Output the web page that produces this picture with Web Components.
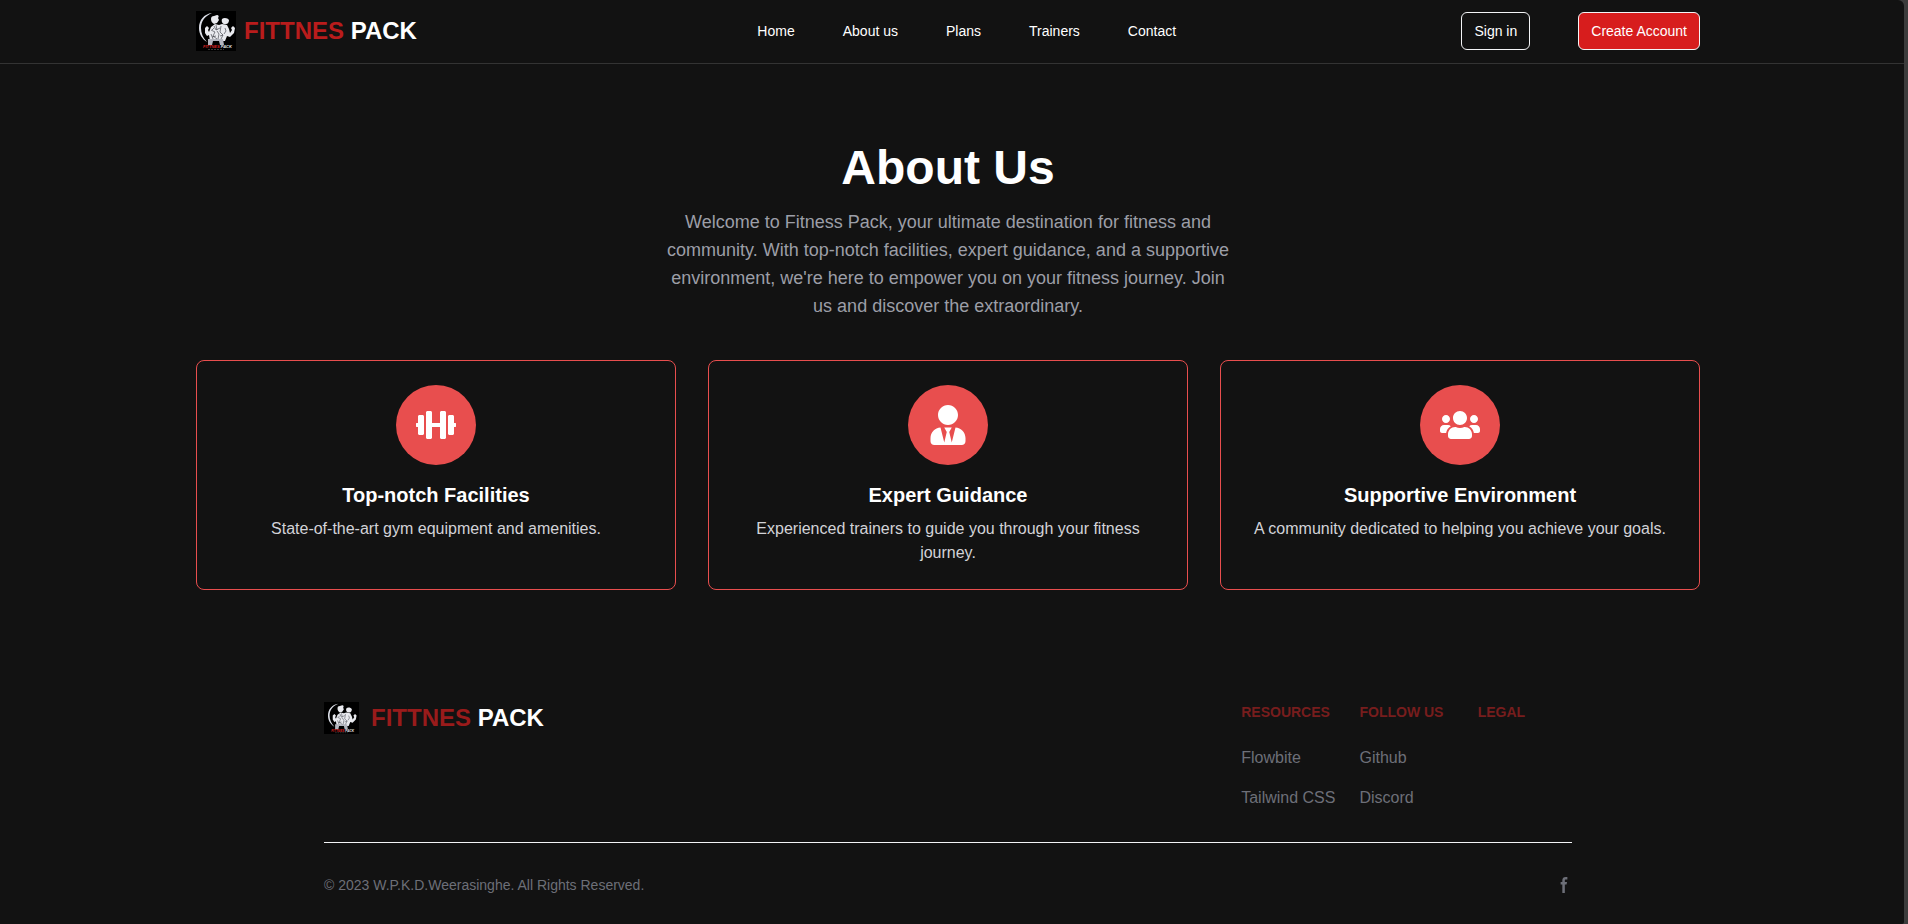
<!DOCTYPE html>
<html lang="en">
<head>
<meta charset="utf-8">
<meta name="viewport" content="width=device-width, initial-scale=1">
<title>Fittnes Pack - About us</title>
<style>
    *{box-sizing: border-box;}
    body{margin: 0;padding-right: 4px;background: #3c3c3c;font-family: Arial, "Liberation Sans", sans-serif;font-size: 16px;line-height: 24px;color: white;}
</style>
</head>
<body>
<fp-page>
    <fp-navbar slot="top">
        <a href="#home">Home</a>
        <a href="#about">About us</a>
        <a href="#plans">Plans</a>
        <a href="#trainers">Trainers</a>
        <a href="#contact">Contact</a>
    </fp-navbar>

    <fp-about>
        <span slot="title">About Us</span>
        <span slot="intro">Welcome to Fitness Pack, your ultimate destination for fitness and community. With top-notch facilities, expert guidance, and a supportive environment, we're here to empower you on your fitness journey. Join us and discover the extraordinary.</span>
        <fp-feature icon="dumbbell">
            <span slot="title">Top-notch Facilities</span>
            State-of-the-art gym equipment and amenities.
        </fp-feature>
        <fp-feature icon="trainer">
            <span slot="title">Expert Guidance</span>
            Experienced trainers to guide you through your fitness journey.
        </fp-feature>
        <fp-feature icon="users">
            <span slot="title">Supportive Environment</span>
            A community dedicated to helping you achieve your goals.
        </fp-feature>
    </fp-about>

    <fp-footer slot="bottom">
        <fp-links>
            <span slot="title">Resources</span>
            <a href="#flowbite">Flowbite</a>
            <a href="#tailwind">Tailwind CSS</a>
        </fp-links>
        <fp-links>
            <span slot="title">Follow us</span>
            <a href="#github">Github</a>
            <a href="#discord">Discord</a>
        </fp-links>
        <fp-links>
            <span slot="title">Legal</span>
        </fp-links>
        <span slot="copy">© 2023 W.P.K.D.Weerasinghe. All Rights Reserved.</span>
    </fp-footer>
</fp-page>

<script>
const ICONS = {
    dumbbell: {
        box: '0 0 640 512',
        d: 'M104 96H56c-13.3 0-24 10.7-24 24v104H8c-4.4 0-8 3.6-8 8v48c0 4.4 3.6 8 8 8h24v104c0 13.3 10.7 24 24 24h48c13.3 0 24-10.7 24-24V120c0-13.3-10.7-24-24-24zm528 128h-24V120c0-13.3-10.7-24-24-24h-48c-13.3 0-24 10.7-24 24v272c0 13.3 10.7 24 24 24h48c13.3 0 24-10.7 24-24V288h24c4.4 0 8-3.6 8-8v-48c0-4.4-3.6-8-8-8zM456 32h-48c-13.3 0-24 10.7-24 24v168H256V56c0-13.3-10.7-24-24-24h-48c-13.3 0-24 10.7-24 24v400c0 13.3 10.7 24 24 24h48c13.3 0 24-10.7 24-24V288h128v168c0 13.3 10.7 24 24 24h48c13.3 0 24-10.7 24-24V56c0-13.3-10.7-24-24-24z'
    },
    trainer: {
        box: '0 0 448 512',
        d: 'M224 256c70.7 0 128-57.3 128-128S294.7 0 224 0 96 57.3 96 128s57.3 128 128 128zm95.8 32.6L272 480l-32-136 32-56h-96l32 56-32 136-47.8-191.4C56.9 292 0 350.3 0 422.4V464c0 26.5 21.5 48 48 48h352c26.5 0 48-21.5 48-48v-41.6c0-72.1-56.9-130.4-128.2-133.8z'
    },
    users: {
        box: '0 0 640 512',
        d: 'M96 224c35.3 0 64-28.7 64-64s-28.7-64-64-64-64 28.7-64 64 28.7 64 64 64zm448 0c35.3 0 64-28.7 64-64s-28.7-64-64-64-64 28.7-64 64 28.7 64 64 64zm32 32h-64c-17.6 0-33.5 7.1-45.1 18.6 40.3 22.1 68.9 62 75.1 109.4h66c17.7 0 32-14.3 32-32v-32c0-35.3-28.7-64-64-64zm-256 0c61.9 0 112-50.1 112-112S381.9 32 320 32 208 82.1 208 144s50.1 112 112 112zm76.8 32h-8.3c-20.8 10-43.9 16-68.5 16s-47.6-6-68.5-16h-8.3C179.6 288 128 339.6 128 403.2V432c0 26.5 21.5 48 48 48h288c26.5 0 48-21.5 48-48v-28.8c0-63.6-51.6-115.2-115.2-115.2zm-223.7-13.4C161.5 263.1 145.6 256 128 256H64c-35.3 0-64 28.7-64 64v32c0 17.7 14.3 32 32 32h65.9c6.3-47.4 34.9-87.3 75.2-109.4z'
    }
};

// every element clones its own template into an open root
function define(name, html, setup) {
    const template = document.createElement('template');
    template.innerHTML = '<style>*{box-sizing: border-box;} :host{box-sizing: border-box;}</style>' + html;

    window.customElements.define(name, class extends HTMLElement {
        constructor() {
            super();
            this.attachShadow({ mode: 'open' });
            this.shadowRoot.appendChild(template.content.cloneNode(true));
        }

        connectedCallback() {
            if (setup) setup(this, this.shadowRoot);
        }
    });
}

define('fp-page', `
    <style>
        :host{display: flex;flex-direction: column;min-height: 100vh;background: #121212;border-radius: 0 6px 2px 0;}
        main{padding-right: 8px;}
    </style>
    <slot name="top"></slot>
    <main><slot></slot></main>
    <slot name="bottom"></slot>
`);

define('fp-logo', `
    <style>
        :host{display: flex;align-items: center;gap: 8px;font-size: 24px;line-height: 32px;font-weight: bold;white-space: nowrap;color: #b91c1c;}
        svg{display: block;width: 40px;height: 40px;background: black;flex: none;}
        b{color: white;}
        :host([small]){gap: 12px;color: #991b1b;}
        :host([small]) svg{width: 35px;height: 32px;}
    </style>
    <svg viewBox="0 0 40 40" aria-hidden="true">
        <path fill="#dcdfe8" d="M16 2C8 3 3 9 3 17c0 6 3 11 8 14C7 27 5 22 5 17 5 10 9 5 16 2z"/>
        <g fill="#e9eaef">
            <path d="M15 8c0-2 1-3 3-3l3-1c2 0 2 2 1 3l1 2-2 3-3 1c-2-1-3-3-3-5z"/>
            <path d="M26 8c2-2 6-1 7 1 0 2-1 4-3 4-3 1-5-2-4-5z"/>
            <path d="M9 17l2-2 2 2-1 2 1 2 2-5 4-3 4 1 3-1 5 1 2 4 1 4 2-3-1-2 2-2 2 2-1 5-4 4-3-1-2 5H14l-1-6-2 1-2-3z"/>
        </g>
        <path fill="#b4b6bf" d="M12 28h15l1 6h-4l-1-4h-6l-1 4h-4z"/>
        <g fill="none" stroke="#30323a" stroke-width=".6">
            <path d="M18 15l2 4 4-2M15 19l4 2-2 4 4 3M21 20l2 3-1 5M25 15l-1 6 3 3-2 4M29 17l1 3-2 3M15 23l2 5M18 17l-2 2M16 26l4-1M24 25l3-1M20 14l1 5"/>
        </g>
        <text x="7" y="37" font-size="4" font-weight="bold" font-style="italic" fill="#dc2626">FITTNES <tspan fill="#e5e7eb">PACK</tspan></text>
        <path stroke="#777777" stroke-width=".5" stroke-dasharray="2 1" d="M12 38.5h16"/>
    </svg>
    <span>FITTNES <b>PACK</b></span>
`, (esse, root) => {
    // the small logo is a bit wider than tall
    if (esse.hasAttribute('small')) {
        root.querySelector('svg').setAttribute('viewBox', '-2 0 44 40');
    }
});

define('fp-navbar', `
    <style>
        :host{display: block;padding: 0 8px 1px 0;border-bottom: 1px solid #333333;}
        header{display: flex;justify-content: space-between;align-items: center;gap: 24px;max-width: 1536px;min-height: 62px;margin: 0 auto;padding: 0 16px;}
        fp-logo{flex: 0 1 276px;}
        nav, .buttons{display: flex;align-items: center;gap: 48px;font-size: 14px;line-height: 20px;}
        ::slotted(a){color: white;text-decoration: none;}
        button{font: inherit;color: white;background: none;border: 1px solid #f3f4f6;border-radius: 6px;padding: 8px 12px;white-space: nowrap;cursor: pointer;}
        .create{background: #d71d1d;}
    </style>
    <header>
        <fp-logo></fp-logo>
        <nav><slot></slot></nav>
        <div class="buttons">
            <button type="button">Sign in</button>
            <button type="button" class="create">Create Account</button>
        </div>
    </header>
`);

define('fp-about', `
    <style>
        :host{display: block;max-width: 1536px;margin: 0 auto;padding: 80px 16px;}
        h1{margin: 0 0 16px;font-size: 48px;line-height: 48px;font-weight: bold;text-align: center;}
        p{max-width: 576px;margin: 0 auto 40px;font-size: 18px;line-height: 28px;text-align: center;color: #9c9ea7;}
        .cards{display: grid;grid-template-columns: repeat(auto-fit, minmax(300px, 1fr));gap: 32px;}
    </style>
    <h1><slot name="title"></slot></h1>
    <p><slot name="intro"></slot></p>
    <div class="cards"><slot></slot></div>
`);

define('fp-feature', `
    <style>
        :host{display: flex;flex-direction: column;align-items: center;padding: 24px;border: 1px solid #e84e4e;border-radius: 8px;text-align: center;}
        .circle{display: flex;align-items: center;justify-content: center;width: 80px;height: 80px;border-radius: 50%;background: #e84e4e;}
        svg{display: block;width: 40px;height: 40px;fill: white;}
        h2{margin: 16px 0 8px;font-size: 20px;line-height: 28px;font-weight: bold;}
        p{margin: 0;color: #d2d3d8;}
    </style>
    <div class="circle"><svg aria-hidden="true"><path/></svg></div>
    <h2><slot name="title"></slot></h2>
    <p><slot></slot></p>
`, (esse, root) => {
    const icon = ICONS[esse.getAttribute('icon')];
    root.querySelector('svg').setAttribute('viewBox', icon.box);
    root.querySelector('path').setAttribute('d', icon.d);
});

define('fp-links', `
    <style>
        :host{display: block;}
        h2{margin: 0 0 24px;font-size: 14px;line-height: 20px;font-weight: bold;text-transform: uppercase;white-space: nowrap;color: #771d1d;}
        div{display: flex;flex-direction: column;gap: 16px;}
        ::slotted(a){color: #6d6f78;text-decoration: none;white-space: nowrap;}
    </style>
    <h2><slot name="title"></slot></h2>
    <div><slot></slot></div>
`);

define('fp-footer', `
    <style>
        :host{display: block;padding-right: 8px;}
        footer{max-width: 1280px;margin: 0 auto;padding: 32px 16px 24px;}
        .top, .bottom{display: flex;justify-content: space-between;}
        .top{align-items: flex-start;}
        .bottom{align-items: center;font-size: 14px;line-height: 20px;color: #6d6f78;}
        .columns{display: grid;grid-template-columns: repeat(3, 1fr);gap: 24px;}
        hr{height: 1px;margin: 32px 0;border: 0;background: #f3f4f6;}
        a{color: inherit;}
        svg{display: block;width: 16px;height: 16px;fill: currentColor;}
    </style>
    <footer>
        <div class="top">
            <fp-logo small></fp-logo>
            <div class="columns"><slot></slot></div>
        </div>
        <hr>
        <div class="bottom">
            <slot name="copy"></slot>
            <a href="#facebook" aria-label="Facebook page">
                <svg viewBox="0 0 8 19" aria-hidden="true"><path fill-rule="evenodd" d="M6.135 3H8V0H6.135a4.147 4.147 0 0 0-4.142 4.142V6H0v3h2v9.938h3V9h2.021l.592-3H5V3.591A.6.6 0 0 1 5.592 3h.543Z"/></svg>
            </a>
        </div>
    </footer>
`);
</script>
</body>
</html>
